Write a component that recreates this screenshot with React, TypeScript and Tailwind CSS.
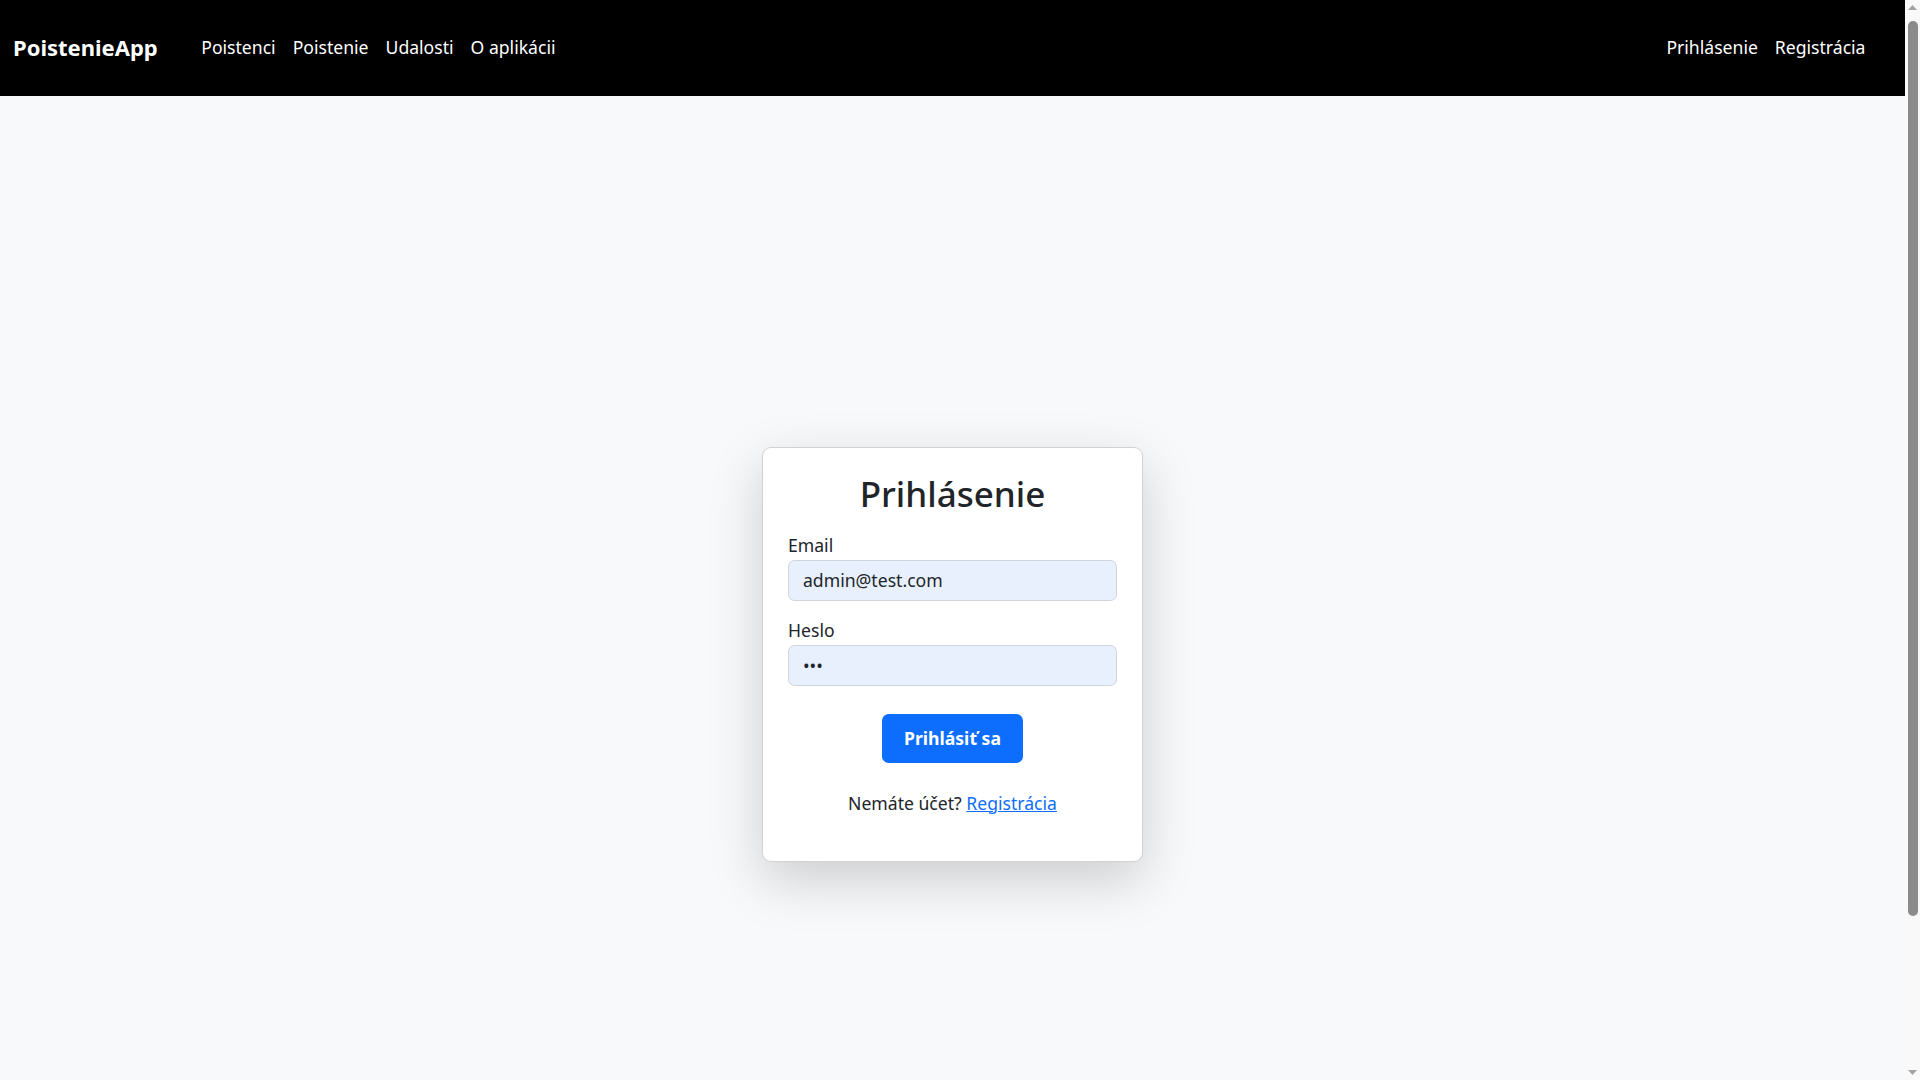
import { useState } from "react";

const leftLinks = ["Poistenci", "Poistenie", "Udalosti", "O aplikácii"];
const rightLinks = ["Prihlásenie", "Registrácia"];

function Navbar() {
  return (
    <nav className="h-[96px] bg-black flex items-center justify-between pl-[13px] pr-[31px] pb-[2px]">
      <div className="flex items-center">
        <a href="#" className="text-[22px] leading-[33px] font-bold text-white no-underline">
          PoistenieApp
        </a>
        <ul className="flex items-center ml-[35px]">
          {leftLinks.map((l) => (
            <li key={l}>
              <a href="#" className="block px-[8.5px] text-[17.6px] leading-[26px] text-white">
                {l}
              </a>
            </li>
          ))}
        </ul>
      </div>
      <ul className="flex items-center">
        {rightLinks.map((l) => (
          <li key={l}>
            <a href="#" className="block px-[8.5px] text-[17.6px] leading-[26px] text-white">
              {l}
            </a>
          </li>
        ))}
      </ul>
    </nav>
  );
}

function LoginCard() {
  const [email, setEmail] = useState("admin@test.com");
  const [password, setPassword] = useState("abc");

  return (
    <div className="w-[381px] bg-white border border-black/[0.175] rounded-[9px] px-[25px] pt-[24px] pb-[25px] shadow-[0_18px_53px_rgba(0,0,0,0.175)]">
      <h2 className="text-center text-[35px] leading-[43px] font-medium text-[#212529] mb-[17px]">
        Prihlásenie
      </h2>
      <form onSubmit={(e) => e.preventDefault()} className="flex flex-col">
        <label className="text-[17.6px] leading-[26px] mb-[2px]">Email</label>
        <input
          type="email"
          value={email}
          onChange={(e) => setEmail(e.target.value)}
          className="h-[41px] px-[14px] text-[17.6px] bg-[#e8f0fe] border border-[#ced4da] rounded-[6.6px] text-[#212529] outline-none"
        />
        <label className="text-[17.6px] leading-[26px] mb-[2px] mt-[16px]">Heslo</label>
        <input
          type="password"
          value={password}
          onChange={(e) => setPassword(e.target.value)}
          className="h-[41px] px-[14px] text-[17.6px] bg-[#e8f0fe] border border-[#ced4da] rounded-[6.6px] text-[#212529] outline-none"
        />
        <div className="flex justify-center mt-[28px]">
          <button
            type="submit"
            className="h-[49px] px-[22px] rounded-[6.6px] bg-[#0d6efd] text-white text-[17.6px] font-bold"
          >
            Prihlásiť sa
          </button>
        </div>
        <p className="text-center text-[17.6px] leading-[26px] mt-[27px] mb-[20px]">
          Nemáte účet?{" "}
          <a href="#" className="text-[#0d6efd] underline">
            Registrácia
          </a>
        </p>
      </form>
    </div>
  );
}

// page scrollbar as it shows in the screenshot (headless hides the real one)
function Scrollbar() {
  return (
    <div className="w-[15px] h-screen bg-[#f9f9f9] flex flex-col">
      <div className="h-[15px] flex items-center justify-center">
        <svg width="9" height="5" viewBox="0 0 9 5">
          <path d="M0 5 L4.5 0 L9 5 Z" fill="#a3a3a3" />
        </svg>
      </div>
      <div className="mt-[6px] ml-[3px] w-[10px] h-[895px] rounded-[5px] bg-[#8b8b8b]" />
      <div className="flex-1" />
      <div className="h-[15px] flex items-center justify-center">
        <svg width="9" height="5" viewBox="0 0 9 5">
          <path d="M0 0 L9 0 L4.5 5 Z" fill="#a3a3a3" />
        </svg>
      </div>
    </div>
  );
}

export default function App() {
  return (
    <div className="h-screen flex overflow-hidden bg-[#f8f9fa] text-[#212529] font-['Noto_Sans',sans-serif]">
      <div className="flex-1 min-w-0 h-screen overflow-hidden">
        <Navbar />
        <main className="h-[1116px] flex items-center justify-center">
          <LoginCard />
        </main>
        <div className="h-[55px]" />
      </div>
      <Scrollbar />
    </div>
  );
}
